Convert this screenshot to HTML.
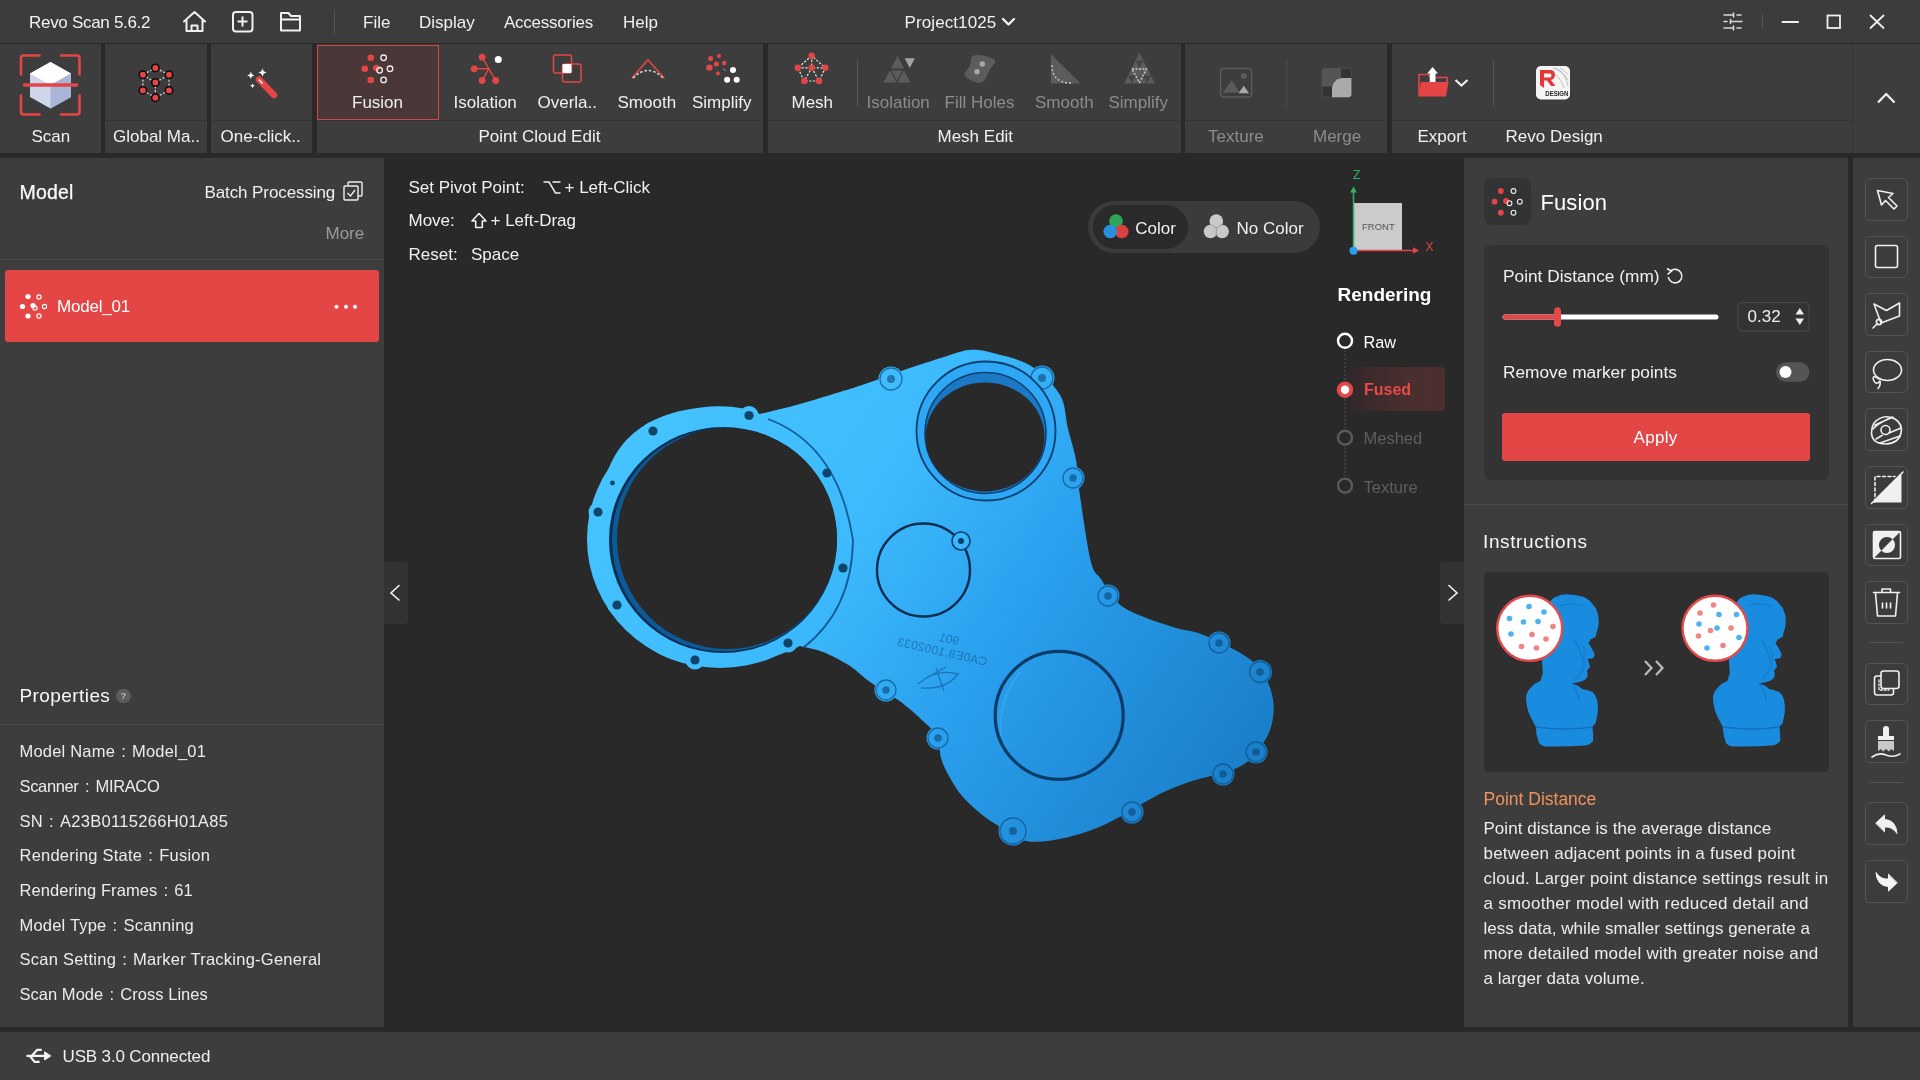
<!DOCTYPE html>
<html><head><meta charset="utf-8">
<style>
*{margin:0;padding:0;box-sizing:border-box}
html,body{width:1920px;height:1080px;overflow:hidden;background:#292929;font-family:"Liberation Sans",sans-serif;color:#f2f2f2}
.a{position:absolute}
.t{position:absolute;white-space:nowrap;line-height:1}
#title{left:0;top:0;width:1920px;height:43px;background:#3c3c3c}
.grp{position:absolute;top:44px;height:109px;background:#3d3d3d}
.hl{position:absolute;height:1px;background:#353535}
#vp{left:384px;top:158px;width:1080px;height:869px;background:#292929}
#lp{left:0;top:158px;width:384px;height:869px;background:#3d3d3d}
#rp{left:1464px;top:158px;width:384px;height:869px;background:#3d3d3d}
#tc{left:1853px;top:158px;width:67px;height:869px;background:#3d3d3d}
#sb{left:0;top:1032px;width:1920px;height:48px;background:#3d3d3d}
.l17{font-size:17px;color:#f0f0f0}
.dis{color:#8c8c8c}
.prop{font-size:16.5px;color:#ececec}
.tb{position:absolute;left:1865px;width:42.5px;height:42.5px;border:1.2px solid #545454;border-radius:5px;background:#3c3c3c}
svg{position:absolute;overflow:visible}
body{will-change:transform}
.c{display:inline-block;text-align:center}
</style></head><body>

<!-- TITLE BAR -->
<div id="title" class="a"></div>
<div class="t" style="left:29px;top:13.5px;font-size:17px;letter-spacing:-0.3px">Revo Scan 5.6.2</div>
<svg style="left:0;top:0" width="1920" height="44" fill="none" stroke="#f0f0f0" stroke-width="2" stroke-linejoin="round" stroke-linecap="round">
  <!-- home -->
  <path d="M184 21.5 L194.5 12 L205 21.5 M186.5 19.5 V31 H202.5 V19.5 M191.5 31 V25.5 H197.5 V31"/>
  <!-- plus box -->
  <rect x="233" y="12" width="19.5" height="19.5" rx="3"/>
  <path d="M242.5 17.3 V25.7 M238.3 21.5 H246.7"/>
  <!-- folder -->
  <path d="M281 30.5 V13 H288.5 L291 16 H300 V30.5 Z M281 19.5 H300"/>
  <!-- chevron -->
  <path d="M1003 19 L1008.5 24.5 L1014 19" stroke-width="2.4"/>
  <!-- sliders -->
  <path d="M1724 15 H1733 M1737 15 H1741 M1733.5 13 V17 M1724 21.5 H1727 M1731 21.5 H1742 M1730.5 19.5 V23.5 M1724 28 H1733 M1737 28 H1741 M1733.5 26 V30" stroke="#d8d8d8" stroke-width="1.6"/>
  <!-- min / max / close -->
  <path d="M1782.5 22 H1798" stroke-width="2"/>
  <rect x="1827.5" y="15.5" width="12.5" height="12.5" stroke-width="1.8" stroke-linejoin="miter"/>
  <path d="M1870.5 15.5 L1883.5 28 M1883.5 15.5 L1870.5 28" stroke-width="1.8"/>
  <path d="M334.5 10 V33 M1762.5 14.5 V28.5" stroke="#555" stroke-width="1"/>
</svg>
<div class="t l17" style="left:363px;top:13.5px">File</div>
<div class="t l17" style="left:419px;top:13.5px">Display</div>
<div class="t l17" style="left:504px;top:13.5px;letter-spacing:-0.25px">Accessories</div>
<div class="t l17" style="left:623px;top:13.5px">Help</div>
<div class="t l17" style="left:904.5px;top:13.5px;letter-spacing:0.1px">Project1025</div>

<!-- TOOLBAR GROUPS -->
<div class="grp" style="left:0;width:101px"></div>
<div class="grp" style="left:105px;width:102px"></div>
<div class="grp" style="left:211px;width:101px"></div>
<div class="grp" style="left:317px;width:446px"></div>
<div class="grp" style="left:768px;width:413px"></div>
<div class="grp" style="left:1185px;width:202px"></div>
<div class="grp" style="left:1392px;width:460px"></div>
<div class="grp" style="left:1853px;width:67px"></div>
<div class="hl" style="left:105px;top:120px;width:102px"></div>
<div class="hl" style="left:211px;top:120px;width:101px"></div>
<div class="hl" style="left:317px;top:120px;width:446px"></div>
<div class="hl" style="left:768px;top:120px;width:413px"></div>
<div class="hl" style="left:1185px;top:120px;width:202px"></div>
<div class="hl" style="left:1392px;top:120px;width:460px"></div>
<div class="a" style="left:317px;top:45px;width:122px;height:75px;background:#4a3838;border:1px solid #d94444"></div>
<!-- TOOLBAR ICONS -->
<svg style="left:0;top:0" width="1920" height="160">
  <!-- Scan -->
  <g fill="none" stroke="#e64545" stroke-width="2.6" stroke-linecap="round">
    <path d="M21 74.5 V58 Q21 55.5 23.5 55.5 H39.5 M61 55.5 H77 Q79.5 55.5 79.5 58 V74.5 M79.5 95.5 V112 Q79.5 114.5 77 114.5 H61 M39.5 114.5 H23.5 Q21 114.5 21 112 V95.5"/>
  </g>
  <path d="M50.5 62 L71 73.5 V97 L50.5 108.5 L30 97 V73.5 Z" fill="#cfd6ec"/>
  <path d="M50.5 62 L71 73.5 L50.5 85 L30 73.5 Z" fill="#ffffff"/>
  <path d="M50.5 85 L71 73.5 V97 L50.5 108.5 Z" fill="#a9b5d6"/>
  <path d="M24.5 85 H76.5" stroke="#e64545" stroke-width="3.6" stroke-linecap="round"/>
  <!-- Global Ma -->
  <g stroke="#ddd" stroke-width="1.2" stroke-dasharray="2.2 1.6" fill="none">
    <path d="M155.4 67.9 L142.9 74.75 V90.4 L155.4 97.7 L169 90.4 V74.75 Z M142.9 74.75 L155.4 82.5 L169 74.75 M155.4 82.5 V97.7"/>
  </g>
  <g fill="#e64545" stroke="#0a0a0a" stroke-width="1.5">
    <circle cx="155.4" cy="67.9" r="3.7"/><circle cx="142.9" cy="74.75" r="3.7"/><circle cx="169" cy="74.75" r="3.7"/>
    <circle cx="155.4" cy="82.5" r="3.7"/><circle cx="142.9" cy="90.4" r="3.7"/><circle cx="169" cy="90.4" r="3.7"/><circle cx="155.4" cy="97.7" r="3.7"/>
  </g>
  <!-- One-click -->
  <path d="M259 79.5 L274 95" stroke="#e64545" stroke-width="6.5" stroke-linecap="round"/>
  <path d="M259.3 80 L262.3 83.2" stroke="#fff" stroke-width="1.4" stroke-linecap="round"/>
  <g fill="#fff">
    <path d="M250.8 71.8 L251.9 74.3 L254.4 75.4 L251.9 76.5 L250.8 79 L249.7 76.5 L247.2 75.4 L249.7 74.3 Z"/>
    <path d="M262.5 68.5 L263.7 71.3 L266.5 72.5 L263.7 73.7 L262.5 76.5 L261.3 73.7 L258.5 72.5 L261.3 71.3 Z"/>
    <path d="M252.5 83.5 L253.3 85 L254.8 85.8 L253.3 86.6 L252.5 88.1 L251.7 86.6 L250.2 85.8 L251.7 85 Z"/>
  </g>
  <!-- Fusion -->
  <g fill="#e64545"><circle cx="370.8" cy="57.8" r="3.3"/><circle cx="364.8" cy="68.8" r="3.3"/><circle cx="376.3" cy="68" r="3.3"/><circle cx="370.8" cy="80" r="3.3"/></g>
  <g fill="none" stroke="#eee" stroke-width="1.3"><circle cx="383.6" cy="57.8" r="2.8"/><circle cx="379.6" cy="70.3" r="2.8"/><circle cx="390" cy="68.8" r="2.8"/><circle cx="383.6" cy="79.9" r="2.8"/></g>
  <!-- Isolation -->
  <path d="M482.1 57.2 L495.7 80.5 M488.75 68.8 L482.1 80.5 M474.2 68.8 H488.75" stroke="#e64545" stroke-width="1.4" fill="none"/>
  <g fill="#e64545"><circle cx="482.1" cy="57.2" r="3.4"/><circle cx="474.2" cy="68.8" r="3.4"/><circle cx="482.1" cy="80.5" r="3.4"/><circle cx="495.7" cy="80.5" r="3.4"/></g>
  <circle cx="498.3" cy="59.5" r="3.5" fill="#fff"/>
  <!-- Overlap -->
  <g fill="none" stroke="#e64545" stroke-width="1.5"><rect x="553.5" y="55" width="18" height="18" rx="2"/><rect x="562.5" y="64" width="18.5" height="18" rx="2"/></g>
  <rect x="562.5" y="64" width="9" height="9" fill="#fff" rx="1"/>
  <!-- Smooth -->
  <path d="M632 78.2 L647.9 59.7 L664.3 78.2" fill="none" stroke="#e64545" stroke-width="1.6"/>
  <path d="M633 78 Q648 63 663 78" fill="none" stroke="#ddd" stroke-width="1.5" stroke-dasharray="2.5 2"/>
  <!-- Simplify -->
  <g fill="#e64545"><circle cx="710.6" cy="58.4" r="2.5"/><circle cx="719" cy="56.1" r="2"/><circle cx="716.4" cy="64.1" r="2.5"/><circle cx="724.2" cy="63.1" r="2.3"/><circle cx="709.4" cy="67.6" r="3.2"/><circle cx="717.9" cy="73.5" r="2"/></g>
  <g fill="#fff"><circle cx="733" cy="70.1" r="3"/><circle cx="727.1" cy="79.8" r="3"/><circle cx="736.7" cy="79.8" r="3"/></g>
  <path d="M723 68.5 L726 71" stroke="#999" stroke-width="1"/>
  <!-- Mesh -->
  <g stroke="#e8e8e8" stroke-width="1.2" stroke-dasharray="2.2 1.6" fill="none">
    <path d="M811.7 55.8 L797.8 67.8 L804.25 81 H819.1 L825.3 67.8 Z M797.8 67.8 H825.3 M811.7 55.8 V67.8 L804.25 81 M811.7 67.8 L819.1 81"/>
  </g>
  <g fill="#e64545"><circle cx="811.7" cy="55.8" r="3.2"/><circle cx="797.8" cy="67.8" r="3.2"/><circle cx="811.7" cy="67.8" r="3.2"/><circle cx="825.3" cy="67.8" r="3.2"/><circle cx="804.25" cy="81" r="3.2"/><circle cx="819.1" cy="81" r="3.2"/></g>
  <path d="M857.5 59 V106" stroke="#555" stroke-width="1"/>
  <!-- Mesh Isolation -->
  <g fill="#5c5c5c">
    <path d="M897.6 55.8 L904.2 68.6 H891 Z"/>
    <path d="M890 70.5 L896.5 82.5 H883.5 Z"/>
    <path d="M904 70.5 L910.5 82.5 H897.5 Z"/>
    <path d="M891.5 70.5 H902.5 L897 80.5 Z"/>
  </g>
  <path d="M904.7 58.3 H914.8 L909.75 68 Z" fill="#a3a3a3"/>
  <!-- Fill Holes -->
  <path d="M973 56 Q979 53 991 58 Q997 60 995 63 Q989 69 987 76 Q985 83 978 83 Q970 81 965 76 Q963 74 967 70 Q971 66 971 60 Q971 57 973 56 Z" fill="#5c5c5c"/>
  <circle cx="982.3" cy="64" r="2.7" fill="#a8a8a8"/><circle cx="977" cy="71.8" r="2.7" fill="#a8a8a8"/>
  <!-- Mesh Smooth -->
  <path d="M1050.8 54.1 L1080.6 83.5 H1050.8 Z" fill="#5c5c5c"/>
  <path d="M1052 65 Q1052 83 1071 83" fill="none" stroke="#c8c8c8" stroke-width="1.4" stroke-dasharray="2 2"/>
  <!-- Mesh Simplify -->
  <path d="M1139.4 52.7 L1154.8 83.5 H1124.3 Z" fill="#5c5c5c"/>
  <g fill="#444"><path d="M1135.5 60.5 H1143.5 L1139.5 68 Z"/><path d="M1128 75.5 H1136 L1132 83 Z"/><path d="M1143 75.5 H1151 L1147 83 Z"/><path d="M1135.5 75.5 H1143.5 L1139.5 83 Z" fill="#555"/></g>
  <path d="M1132 69 H1146.5 L1139.4 82.5 Z" fill="none" stroke="#d0d0d0" stroke-width="1.3" stroke-dasharray="2 1.5"/>
  <!-- Texture -->
  <rect x="1220.6" y="68.4" width="31" height="28.5" rx="3" fill="none" stroke="#5a5a5a" stroke-width="1.5"/>
  <path d="M1222.5 92.8 L1231.7 80.3 L1240 92.8 Z" fill="#5a5a5a"/>
  <path d="M1238.5 93.3 L1243.75 85.7 L1249 93.3 Z" fill="#aaaaaa"/>
  <circle cx="1243.75" cy="76.1" r="3" fill="#5a5a5a"/>
  <path d="M1287 58 V106" stroke="#4f4f4f" stroke-width="1"/>
  <!-- Merge -->
  <rect x="1322" y="68.2" width="29.4" height="29" rx="3" fill="#333" stroke="#4a4a4a" stroke-width="1"/>
  <path d="M1322 86.5 V71 Q1322 68.2 1325 68.2 H1341 V78 Q1332 86.5 1332 86.5 Z" fill="#555"/>
  <path d="M1332 97.2 V87.5 Q1333 80 1341.5 78 H1351.4 V94.2 Q1351.4 97.2 1348.4 97.2 Z" fill="#aaa"/>
  <!-- Export -->
  <path d="M1419 95 V74.5 H1428 L1431 77.5 H1447 V82" fill="none" stroke="#e64545" stroke-width="1.6"/>
  <path d="M1421 82 H1448.5 L1446 96.6 H1418.5 Z" fill="#e64545"/>
  <path d="M1432.6 66.9 L1438 73.5 H1435.5 V82 H1429.7 V73.5 H1427.2 Z" fill="#fff"/>
  <path d="M1455.5 80 L1461.5 85.5 L1467.5 80" fill="none" stroke="#f0f0f0" stroke-width="2.2"/>
  <path d="M1493.5 60 V106" stroke="#555" stroke-width="1"/>
  <!-- Revo Design -->
  <rect x="1536" y="66" width="34" height="33.4" rx="5" fill="#f4f4f4"/>
  <path d="M1540 70 H1550 Q1555 70 1555 75 Q1555 79 1551 80 L1555.5 86 H1551 L1547 80.5 H1544 V88 L1540 85 Z M1544 73.5 V77.5 H1550 Q1551.5 77.5 1551.5 75.5 Q1551.5 73.5 1550 73.5 Z" fill="#e83535"/>
  <g stroke="#888" stroke-width="0.6" fill="none" opacity="0.8"><path d="M1553 68 Q1562 70 1568 80 M1556 68 Q1566 74 1568 86 M1560 68 L1568 74 M1552 72 Q1560 76 1564 88"/></g>
  <text x="1545.3" y="96" font-family="Liberation Sans" font-size="6.5" font-weight="bold" fill="#222" textLength="23" lengthAdjust="spacingAndGlyphs">DESIGN</text>
  <!-- collapse chevron -->
  <path d="M1878 102.5 L1886.2 94 L1894.5 102.5" fill="none" stroke="#f2f2f2" stroke-width="2.2"/>
  <path d="M1852.5 44 V153" stroke="#353535" stroke-width="1"/>
</svg>

<!-- TOOLBAR LABELS -->
<div class="t l17" style="left:31.5px;top:128px">Scan</div>
<div class="t l17" style="left:113px;top:128px">Global Ma..</div>
<div class="t l17" style="left:220.5px;top:128px">One-click..</div>
<div class="t l17" style="left:352px;top:94px">Fusion</div>
<div class="t l17" style="left:453.5px;top:94px">Isolation</div>
<div class="t l17" style="left:537.5px;top:94px">Overla..</div>
<div class="t l17" style="left:617.5px;top:94px">Smooth</div>
<div class="t l17" style="left:692px;top:94px">Simplify</div>
<div class="t l17" style="left:478.5px;top:128px">Point Cloud Edit</div>
<div class="t l17" style="left:791.5px;top:94px">Mesh</div>
<div class="t l17 dis" style="left:866.5px;top:94px">Isolation</div>
<div class="t l17 dis" style="left:944.5px;top:94px">Fill Holes</div>
<div class="t l17 dis" style="left:1035px;top:94px">Smooth</div>
<div class="t l17 dis" style="left:1108.5px;top:94px">Simplify</div>
<div class="t l17" style="left:937.5px;top:128px">Mesh Edit</div>
<div class="t l17 dis" style="left:1208px;top:128px">Texture</div>
<div class="t l17 dis" style="left:1313px;top:128px">Merge</div>
<div class="t l17" style="left:1417.5px;top:128px">Export</div>
<div class="t l17" style="left:1505.5px;top:128px">Revo Design</div>
<!-- PANELS -->
<div id="lp" class="a"></div>
<div id="vp" class="a"></div>
<div id="rp" class="a"></div>
<div id="tc" class="a"></div>
<div id="sb" class="a"></div>

<!-- LEFT PANEL -->
<div class="t" style="left:19.5px;top:183px;font-size:19.5px;letter-spacing:0.2px;color:#fafafa;-webkit-text-stroke:0.25px #fafafa">Model</div>
<div class="t l17" style="left:204.5px;top:183.5px;letter-spacing:-0.1px">Batch Processing</div>
<svg style="left:0;top:0" width="384" height="1080" fill="none">
  <path d="M348 185.5 V183 Q348 182 349 182 H361 Q362 182 362 183 V195 Q362 196 361 196 H358.5" stroke="#eee" stroke-width="1.4"/>
  <rect x="344" y="186" width="14" height="14" rx="1" stroke="#eee" stroke-width="1.4"/>
  <path d="M347.5 193 L350.5 196 L355 190" stroke="#eee" stroke-width="1.4"/>
</svg>
<div class="t l17" style="left:325.5px;top:224.7px;color:#9a9a9a">More</div>
<div class="a" style="left:0;top:259px;width:384px;height:1px;background:#4d4d4d"></div>
<div class="a" style="left:5px;top:270px;width:374px;height:72px;background:#e44646;border-radius:3px"></div>
<svg style="left:0;top:0" width="384" height="400">
  <g fill="#fff"><circle cx="28" cy="296.5" r="2.6"/><circle cx="22.5" cy="306.5" r="2.6"/><circle cx="33" cy="305.5" r="2.6"/><circle cx="28" cy="316" r="2.6"/></g>
  <g fill="none" stroke="#fff" stroke-width="1.1"><circle cx="39" cy="297" r="2.1"/><circle cx="35" cy="308" r="2.1"/><circle cx="44.5" cy="306.5" r="2.1"/><circle cx="39" cy="316" r="2.1"/></g>
  <g fill="#fff"><circle cx="336.5" cy="306.8" r="2"/><circle cx="346" cy="306.8" r="2"/><circle cx="355" cy="306.8" r="2"/></g>
</svg>
<div class="t l17" style="left:57px;top:297.6px;color:#fff;letter-spacing:-0.2px">Model_01</div>

<div class="t" style="left:19.5px;top:686px;font-size:19px;color:#f8f8f8;letter-spacing:0.42px">Properties</div>
<div class="a" style="left:116.3px;top:688.8px;width:14.5px;height:14.5px;border-radius:50%;background:#5d5d5d;color:#bbb;font-size:9px;line-height:14.5px;text-align:center;font-weight:bold">?</div>
<div class="a" style="left:0;top:723.5px;width:384px;height:1px;background:#4d4d4d"></div>
<div class="t prop" style="left:19.5px;top:743.2px;letter-spacing:0.2px">Model Name<span class="c" style="width:17px">:</span>Model_01</div>
<div class="t prop" style="left:19.5px;top:777.9px;letter-spacing:-0.35px">Scanner<span class="c" style="width:17px">:</span>MIRACO</div>
<div class="t prop" style="left:19.5px;top:812.6px;letter-spacing:0.3px">SN<span class="c" style="width:17px">:</span>A23B0115266H01A85</div>
<div class="t prop" style="left:19.5px;top:847.3px;letter-spacing:0.23px">Rendering State<span class="c" style="width:17px">:</span>Fusion</div>
<div class="t prop" style="left:19.5px;top:882px;letter-spacing:0.07px">Rendering Frames<span class="c" style="width:17px">:</span>61</div>
<div class="t prop" style="left:19.5px;top:916.7px;letter-spacing:0.2px">Model Type<span class="c" style="width:17px">:</span>Scanning</div>
<div class="t prop" style="left:19.5px;top:951.4px;letter-spacing:0.25px">Scan Setting<span class="c" style="width:17px">:</span>Marker Tracking-General</div>
<div class="t prop" style="left:19.5px;top:986px;letter-spacing:0.035px">Scan Mode<span class="c" style="width:17px">:</span>Cross Lines</div>

<!-- STATUS BAR -->
<svg style="left:0;top:0" width="300" height="1080" fill="none" stroke="#f4f4f4" stroke-width="2.3" stroke-linejoin="round">
  <path d="M26.5 1055.9 H46"/>
  <path d="M41.7 1049.8 H37.2 L31.7 1055.9 M39.6 1061.9 H34.6 L29.8 1055.9"/>
  <path d="M44.6 1051.8 L50.8 1055.9 L44.6 1060 Z" fill="#f4f4f4" stroke-width="1"/>
</svg>
<div class="t l17" style="left:62.5px;top:1047.5px;letter-spacing:-0.15px">USB 3.0 Connected</div>

<!-- VIEWPORT OVERLAY TEXT -->
<div class="t l17" style="left:408.5px;top:178.6px">Set Pivot Point:</div>
<svg style="left:0;top:0" width="600" height="220" fill="none" stroke="#f0f0f0" stroke-width="1.5"><path d="M543.5 182 H549 L555.5 193 H560.5 M552.5 182 H560.5"/></svg>
<div class="t l17" style="left:564.5px;top:178.6px">+ Left-Click</div>
<div class="t l17" style="left:408.5px;top:212.4px">Move:</div>
<svg style="left:470px;top:212px" width="18" height="18" fill="none" stroke="#f0f0f0" stroke-width="1.6" stroke-linejoin="round"><path d="M9 1.5 L16 9 H12.3 V15.5 H5.7 V9 H2 Z"/></svg>
<div class="t l17" style="left:490.5px;top:212.4px">+ Left-Drag</div>
<div class="t l17" style="left:408.5px;top:246.3px">Reset:</div>
<div class="t l17" style="left:471px;top:246.3px">Space</div>

<!-- collapse buttons -->
<div class="a" style="left:384px;top:562px;width:24px;height:62px;background:#333;border-radius:0 3px 3px 0"></div>
<div class="a" style="left:1440px;top:562px;width:24px;height:62px;background:#333;border-radius:3px 0 0 3px"></div>
<svg style="left:0;top:0" width="1920" height="1080" fill="none" stroke="#f4f4f4" stroke-width="1.6" stroke-linecap="round">
  <path d="M399 585.5 L391 593 L399 600"/>
  <path d="M1449 585.5 L1457 593 L1449 600"/>
</svg>
<!-- COLOR PILL -->
<div class="a" style="left:1087.5px;top:200.5px;width:232px;height:52px;border-radius:26px;background:#3b3b3b"></div>
<div class="a" style="left:1092.5px;top:205px;width:95px;height:43.5px;border-radius:22px;background:#2a2a2a"></div>
<svg style="left:0;top:0" width="1920" height="300">
  <circle cx="1116" cy="221" r="6.8" fill="#2fa55a"/>
  <circle cx="1121.8" cy="231.5" r="6.8" fill="#d94040"/>
  <circle cx="1110.2" cy="231.5" r="6.8" fill="#2b8fe0"/>
  <circle cx="1216.3" cy="221" r="6.8" fill="#c8c8c8"/>
  <circle cx="1222.1" cy="231.5" r="6.8" fill="#c8c8c8"/>
  <circle cx="1210.5" cy="231.5" r="6.8" fill="#c8c8c8"/>
  <path d="M1216.3 228 V235 M1216.3 228 L1210.5 224.5 M1216.3 228 L1222.1 224.5" stroke="#9a9a9a" stroke-width="1"/>
</svg>
<div class="t l17" style="left:1135.3px;top:219.5px">Color</div>
<div class="t l17" style="left:1236.5px;top:219.5px">No Color</div>

<!-- AXIS WIDGET -->
<div class="a" style="left:1353.5px;top:203px;width:48px;height:47.5px;background:#cbcbcb"></div>
<div class="t" style="left:1362px;top:222px;font-size:9.5px;color:#555">FRONT</div>
<svg style="left:0;top:0" width="1920" height="300">
  <path d="M1353.5 251 V191" stroke="#2fb36a" stroke-width="1.5"/>
  <path d="M1350.2 192.5 L1353.5 186.5 L1356.8 192.5 Z" fill="#2fb36a"/>
  <path d="M1353.5 250.5 H1414" stroke="#e04848" stroke-width="1.5"/>
  <path d="M1413 247.2 L1419 250.5 L1413 253.8 Z" fill="#e04848"/>
  <circle cx="1353.5" cy="250.8" r="4" fill="#2aa0f0"/>
  <text x="1353" y="179" font-family="Liberation Sans" font-size="12" fill="#2fb36a">Z</text>
  <text x="1425.5" y="250.5" font-family="Liberation Sans" font-size="12" fill="#e04848">X</text>
</svg>

<!-- RENDERING -->
<div class="t" style="left:1337.5px;top:284.8px;font-size:19px;font-weight:bold;color:#fff">Rendering</div>
<div class="a" style="left:1351px;top:367px;width:94px;height:44px;border-radius:0 4px 4px 0;background:linear-gradient(90deg,#33282a 0%,#4a2f2f 60%,#4d2e2e 100%)"></div>
<svg style="left:0;top:0" width="1920" height="520">
  <path d="M1345 350 V381 M1345 399 V428 M1345 447 V476" stroke="#555" stroke-width="1" stroke-dasharray="2 2"/>
  <circle cx="1345" cy="340.8" r="7" fill="none" stroke="#fff" stroke-width="2.4"/>
  <circle cx="1345" cy="389.7" r="8.2" fill="#e24848"/>
  <circle cx="1345" cy="389.7" r="4.2" fill="#fff"/>
  <circle cx="1345" cy="437.7" r="7" fill="none" stroke="#5a5a5a" stroke-width="2.4"/>
  <circle cx="1345" cy="485.6" r="7" fill="none" stroke="#5a5a5a" stroke-width="2.4"/>
</svg>
<div class="t" style="left:1363.5px;top:333.6px;font-size:16.3px;color:#fff">Raw</div>
<div class="t" style="left:1364px;top:381.5px;font-size:16px;font-weight:bold;color:#e84a4a">Fused</div>
<div class="t" style="left:1363.5px;top:430.4px;font-size:16.5px;color:#5e5e5e">Meshed</div>
<div class="t" style="left:1363.5px;top:478.5px;font-size:16.5px;color:#5e5e5e">Texture</div>
<!-- 3D OBJECT -->
<svg style="left:0;top:0" width="1920" height="1080">
  <defs>
    <linearGradient id="bg1" gradientUnits="userSpaceOnUse" x1="640" y1="400" x2="1230" y2="800">
      <stop offset="0" stop-color="#45c4ff"/>
      <stop offset="0.35" stop-color="#3dbafd"/>
      <stop offset="0.6" stop-color="#2aa0ee"/>
      <stop offset="1" stop-color="#1a7ec9"/>
    </linearGradient>
  </defs>
  <g fill="url(#bg1)">
    <path d="M600 520 Q600 430 680 411 Q730 400 760 414 C766.7 412.3 786.7 407.7 800.0 404.0 C813.3 400.3 829.2 395.3 840.0 392.0 C850.8 388.7 854.3 387.7 865.0 384.0 C875.7 380.3 890.8 374.5 904.0 370.0 C917.2 365.5 933.2 360.3 944.0 357.0 C954.8 353.7 960.8 350.7 969.0 350.0 C977.2 349.3 982.7 350.3 993.0 353.0 C1003.3 355.7 1019.8 359.0 1031.0 366.0 C1042.2 373.0 1053.8 384.5 1060.0 395.0 C1066.2 405.5 1065.3 418.2 1068.0 429.0 C1070.7 439.8 1074.0 448.8 1076.0 460.0 C1078.0 471.2 1077.5 479.0 1080.0 496.0 C1082.5 513.0 1087.5 548.2 1091.0 562.0 C1094.5 575.8 1097.0 572.7 1101.0 579.0 C1105.0 585.3 1109.5 594.3 1115.0 600.0 C1120.5 605.7 1123.8 608.3 1134.0 613.0 C1144.2 617.7 1164.8 624.5 1176.0 628.0 C1187.2 631.5 1190.0 629.7 1201.0 634.0 C1212.0 638.3 1231.8 647.7 1242.0 654.0 C1252.2 660.3 1256.8 664.5 1262.0 672.0 C1267.2 679.5 1271.5 689.8 1273.0 699.0 C1274.5 708.2 1273.5 718.5 1271.0 727.0 C1268.5 735.5 1263.7 743.2 1258.0 750.0 C1252.3 756.8 1248.5 762.7 1237.0 768.0 C1225.5 773.3 1202.5 777.3 1189.0 782.0 C1175.5 786.7 1169.8 789.0 1156.0 796.0 C1142.2 803.0 1121.3 817.0 1106.0 824.0 C1090.7 831.0 1077.3 835.2 1064.0 838.0 C1050.7 840.8 1037.2 843.2 1026.0 841.0 C1014.8 838.8 1004.7 829.7 997.0 825.0 C989.3 820.3 985.8 817.8 980.0 813.0 C974.2 808.2 967.2 802.2 962.0 796.0 C956.8 789.8 952.5 782.3 949.0 776.0 C945.5 769.7 942.8 764.5 941.0 758.0 C939.2 751.5 940.8 743.0 938.0 737.0 C935.2 731.0 930.2 727.8 924.0 722.0 C917.8 716.2 910.0 708.7 901.0 702.0 C892.0 695.3 878.5 688.0 870.0 682.0 C861.5 676.0 857.8 671.0 850.0 666.0 C842.2 661.0 831.3 655.3 823.0 652.0 C814.7 648.7 803.8 647.0 800.0 646.0 Q740 675 680 662 Q600 640 600 520 Z"/>
    <ellipse cx="720" cy="539" rx="133" ry="129"/>
    <circle cx="653" cy="431" r="9.5"/><circle cx="749" cy="415.5" r="9.5"/><circle cx="827" cy="473" r="9.5"/><circle cx="843" cy="568" r="9.5"/>
    <circle cx="788" cy="643" r="9.5"/><circle cx="695" cy="660" r="9.5"/><circle cx="617" cy="605" r="9.5"/><circle cx="598" cy="512" r="9.5"/>
    <circle cx="891" cy="379" r="12.5"/><circle cx="1042" cy="378" r="12.5"/><circle cx="1073" cy="478" r="11.5"/>
    <circle cx="1108" cy="596" r="11.5"/><circle cx="1219" cy="643" r="11.5"/><circle cx="1260" cy="672" r="12"/>
    <circle cx="1256" cy="752" r="11.5"/><circle cx="1223" cy="774" r="11.5"/><circle cx="1132" cy="812" r="11.5"/><circle cx="1013" cy="831" r="14.5"/>
    <circle cx="938" cy="738" r="11.5"/><circle cx="886" cy="690" r="11.5"/>
  </g>
  <g fill="none" stroke="#0d4f85" stroke-width="1.3" opacity="0.7">
    <circle cx="891" cy="379" r="11"/><circle cx="1042" cy="378" r="11"/><circle cx="1073" cy="478" r="10"/>
    <circle cx="1108" cy="596" r="10"/><circle cx="1219" cy="643" r="10"/><circle cx="1260" cy="672" r="10.5"/>
    <circle cx="1256" cy="752" r="10"/><circle cx="1223" cy="774" r="10"/><circle cx="1132" cy="812" r="10"/><circle cx="1013" cy="831" r="13"/>
    <circle cx="938" cy="738" r="10"/><circle cx="886" cy="690" r="10"/><circle cx="961" cy="541" r="8"/>
  </g>
  <g fill="#0b3f6e" opacity="0.55">
        <circle cx="891" cy="379" r="4"/><circle cx="1042" cy="378" r="4"/><circle cx="1073" cy="478" r="3.8"/><circle cx="961" cy="541" r="3"/>
    <circle cx="1108" cy="596" r="3.8"/><circle cx="1219" cy="643" r="3.8"/><circle cx="1260" cy="672" r="3.8"/><circle cx="1256" cy="752" r="3.8"/>
    <circle cx="1223" cy="774" r="3.8"/><circle cx="1132" cy="812" r="3.8"/><circle cx="1013" cy="831" r="4"/><circle cx="938" cy="738" r="3.8"/><circle cx="886" cy="690" r="3.8"/>
  </g>
  <g fill="#08304f" opacity="0.85">
    <circle cx="653" cy="431" r="4.6"/><circle cx="749" cy="415.5" r="4.6"/><circle cx="827" cy="473" r="4.6"/><circle cx="843" cy="568" r="4.6"/>
    <circle cx="788" cy="643" r="4.6"/><circle cx="695" cy="660" r="4.6"/><circle cx="617" cy="605" r="4.6"/><circle cx="598" cy="512" r="4.6"/><circle cx="612.5" cy="483" r="2.4"/>
  </g>
  <!-- ring outer edge line -->
  <path d="M768 419 Q838 445 853 540 Q852 610 803 648" fill="none" stroke="#0c4a80" stroke-width="1.8" opacity="0.85"/>
  <!-- big ring hole -->
  <ellipse cx="723" cy="540" rx="114" ry="113" fill="#0a2f52"/>
  <ellipse cx="724" cy="540" rx="112" ry="111.5" fill="#0d5a98"/>
  <ellipse cx="727" cy="538.5" rx="110" ry="110.5" fill="#292929"/>
  <!-- upper hole -->
  <circle cx="986" cy="431" r="69.5" fill="#2ea8f5" stroke="#0b3f6e" stroke-width="1.8"/>
  <circle cx="985.5" cy="433" r="60.5" fill="#1a78c4" stroke="#0b3f6e" stroke-width="1.5"/>
  <ellipse cx="985" cy="437" rx="59.5" ry="54.5" fill="#292929"/>
  <!-- small recess -->
  <circle cx="923.5" cy="570" r="46.5" fill="none" stroke="#082c4e" stroke-width="2.4"/>
  <circle cx="961" cy="541" r="9" fill="#3ab6fc" stroke="#0b3f6e" stroke-width="1.6"/>
  <circle cx="961" cy="541" r="3" fill="#0b3f6e"/>
  <!-- big recess -->
  <circle cx="1059.2" cy="715.4" r="64" fill="none" stroke="#0a3a66" stroke-width="3.2"/>
  <path d="M1001 735 Q998 700 1020 672" fill="none" stroke="#4cbcff" stroke-width="2" opacity="0.35"/>
  <!-- engraved text -->
  <g transform="translate(986 666) rotate(13) scale(-1 1)" opacity="0.55">
    <text x="0" y="0" font-family="Liberation Sans" font-size="12" fill="#0d4f8a" letter-spacing="0.3">CA0E8.1002033</text>
    <text x="32" y="-14" font-family="Liberation Sans" font-size="12" fill="#0d4f8a">901</text>
  </g>
  <path d="M918 684 Q936 668 958 674 Q946 690 921 688 M936 668 L944 691 M927 678 L946 667" fill="none" stroke="#0d4f8a" stroke-width="1.3" opacity="0.55"/>
</svg>

<!-- RIGHT PANEL -->
<div class="a" style="left:1483.5px;top:177.5px;width:47.5px;height:47.5px;border-radius:8px;background:#333"></div>
<svg style="left:0;top:0" width="1920" height="300">
  <g fill="#e64545"><circle cx="1500.8" cy="191" r="2.9"/><circle cx="1494.6" cy="201.7" r="2.9"/><circle cx="1506" cy="201" r="2.9"/><circle cx="1500.8" cy="212.7" r="2.9"/></g>
  <g fill="none" stroke="#eee" stroke-width="1.1"><circle cx="1513.5" cy="191" r="2.4"/><circle cx="1509.5" cy="203.2" r="2.4"/><circle cx="1519.8" cy="201.7" r="2.4"/><circle cx="1513.5" cy="212.7" r="2.4"/></g>
</svg>
<div class="t" style="left:1540.5px;top:192px;font-size:22px;color:#fff;letter-spacing:0.1px">Fusion</div>
<div class="a" style="left:1483.5px;top:245px;width:345px;height:235px;border-radius:6px;background:#333"></div>
<div class="t" style="left:1503px;top:267.5px;font-size:17.3px;color:#f2f2f2">Point Distance (mm)</div>
<svg style="left:0;top:0" width="1920" height="500" fill="none">
  <path d="M1670.5 271 A6.8 6.8 0 1 1 1668.3 277" stroke="#eee" stroke-width="1.6"/>
  <path d="M1667 268.5 L1671.5 271.2 L1667.5 274.5" stroke="#eee" stroke-width="1.6"/>
  <rect x="1502.5" y="314.5" width="216" height="5" rx="2.5" fill="#fff"/>
  <rect x="1502.5" y="314.5" width="54" height="5" rx="2.5" fill="#e24848"/>
  <rect x="1554" y="307.2" width="7" height="19.5" rx="3.5" fill="#e24848"/>
  <rect x="1738" y="302.5" width="71" height="28.5" rx="4" fill="#333" stroke="#4a4a4a" stroke-width="1"/>
  <path d="M1795.5 314.5 L1799.8 308 L1804 314.5 Z M1795.5 318.5 L1799.8 325 L1804 318.5 Z" fill="#eee"/>
  <rect x="1776" y="362.3" width="33.5" height="19.5" rx="9.75" fill="#555"/>
  <circle cx="1785.5" cy="372" r="6" fill="#fff"/>
</svg>
<div class="t l17" style="left:1747.5px;top:308.4px">0.32</div>
<div class="t" style="left:1503px;top:363.7px;font-size:17.3px;color:#f2f2f2">Remove marker points</div>
<div class="a" style="left:1502px;top:413px;width:307.5px;height:47.5px;border-radius:3px;background:#e44646"></div>
<div class="t l17" style="left:1633.5px;top:429px;color:#fff;letter-spacing:0.3px">Apply</div>
<div class="a" style="left:1464px;top:504px;width:384px;height:1px;background:#4b4b4b"></div>
<div class="t" style="left:1483px;top:532.2px;font-size:19px;color:#f6f6f6;letter-spacing:0.62px">Instructions</div>
<div class="a" style="left:1483.5px;top:571.5px;width:345px;height:200px;border-radius:5px;background:#2f2f2f"></div>
<!-- INSTRUCTION IMAGE -->
<svg style="left:0;top:0" width="1920" height="1080">
  <defs>
    <g id="bust">
      <path d="M1549.8 602.3 Q1552 598 1556.1 596.8 Q1562 594 1568.7 594.4 Q1576 594.5 1582.9 596.8 Q1589 599 1592.4 603.9 Q1596 607 1597.1 611.8 Q1599 616 1598.7 621.2 Q1599 626 1597.1 630.7 L1595.5 637 L1590.8 639.3 L1588.4 643.3 Q1592 648 1594.7 654.3 L1593.1 658.2 L1587.6 659 Q1589 662 1590 666.9 L1586.9 670.8 Q1588 673 1587.6 676.3 Q1586 680 1582.9 681.1 Q1577 683 1571.9 683.4 L1578.2 685.8 L1582.1 688.9 Q1588 690 1592.4 692.1 Q1596 695 1597.1 700 Q1598 705 1597.9 711 Q1597 718 1595.5 723.6 L1592.4 726.7 Q1593.5 734 1593.1 740.9 Q1590 745 1584.5 745.6 Q1565 747 1545.1 746.4 Q1540 745 1538.8 742.5 Q1536 735 1535.7 726.7 L1532.5 720.4 Q1528 713 1527 706.3 Q1525.5 700 1526.2 695.2 Q1528 690 1530.9 687.4 Q1535 683 1540.4 681.1 L1542.8 673.2 L1542 660.6 L1543.5 632.2 L1546.7 613.3 Z" fill="#1a8ce0"/>
      <path d="M1536 727 Q1565 731 1592.5 727" fill="none" stroke="#1270bd" stroke-width="1.3"/>
      <path d="M1572 683.4 Q1578 692 1580 702 M1575 640 Q1580 650 1584 662 M1560 606 Q1570 602 1585 606" fill="none" stroke="#1474c0" stroke-width="1.1" opacity="0.8"/>
      <path d="M1583 646 Q1586 655 1584 666 Q1580 676 1574 680" fill="none" stroke="#1677c6" stroke-width="3" opacity="0.5"/>
    </g>
  </defs>
  <use href="#bust"/>
  <use href="#bust" transform="translate(187 0)"/>
  <g>
    <circle cx="1529.7" cy="628.3" r="32.5" fill="#fff" stroke="#e44a4a" stroke-width="2.4"/>
    <g fill="#4db3ec"><circle cx="1529" cy="606.5" r="2.8"/><circle cx="1544" cy="612" r="2.8"/><circle cx="1509.5" cy="618.5" r="2.8"/><circle cx="1523.5" cy="622" r="2.8"/><circle cx="1538" cy="621.5" r="2.8"/><circle cx="1511" cy="634" r="2.8"/></g>
    <g fill="#f08585"><circle cx="1553" cy="626.5" r="2.8"/><circle cx="1532" cy="634.5" r="2.8"/><circle cx="1546" cy="639" r="2.8"/><circle cx="1521.5" cy="646.5" r="2.8"/><circle cx="1536.5" cy="648" r="2.8"/></g>
  </g>
  <g>
    <circle cx="1715" cy="628.3" r="32.5" fill="#fff" stroke="#e44a4a" stroke-width="2.4"/>
    <g fill="#f08585"><circle cx="1713.5" cy="605" r="2.8"/><circle cx="1700" cy="613" r="2.8"/><circle cx="1731" cy="628" r="2.8"/><circle cx="1710.5" cy="630.5" r="2.8"/><circle cx="1698.5" cy="636" r="2.8"/><circle cx="1723" cy="645.5" r="2.8"/></g>
    <g fill="#4db3ec"><circle cx="1719" cy="614.5" r="2.8"/><circle cx="1736.5" cy="614.5" r="2.8"/><circle cx="1699" cy="624" r="2.8"/><circle cx="1717" cy="628" r="2.8"/><circle cx="1739" cy="637.5" r="2.8"/><circle cx="1707" cy="648" r="2.8"/></g>
  </g>
  <path d="M1645 661 L1651.5 668 L1645 675 M1656 661 L1662.5 668 L1656 675" fill="none" stroke="#bdbdbd" stroke-width="2.2"/>
</svg>

<div class="t" style="left:1483.5px;top:790.9px;font-size:17.5px;color:#f0925a">Point Distance</div>
<div class="t" style="left:1483.5px;top:815.7px;font-size:17px;line-height:25px;color:#ececec;letter-spacing:0.036px">Point distance is the average distance</div>
<div class="t" style="left:1483.5px;top:840.7px;font-size:17px;line-height:25px;color:#ececec;letter-spacing:0.215px">between adjacent points in a fused point</div>
<div class="t" style="left:1483.5px;top:865.7px;font-size:17px;line-height:25px;color:#ececec;letter-spacing:0.18px">cloud. Larger point distance settings result in</div>
<div class="t" style="left:1483.5px;top:890.7px;font-size:17px;line-height:25px;color:#ececec;letter-spacing:0.24px">a smoother model with reduced detail and</div>
<div class="t" style="left:1483.5px;top:915.7px;font-size:17px;line-height:25px;color:#ececec;letter-spacing:0.03px">less data, while smaller settings generate a</div>
<div class="t" style="left:1483.5px;top:940.7px;font-size:17px;line-height:25px;color:#ececec;letter-spacing:0.21px">more detailed model with greater noise and</div>
<div class="t" style="left:1483.5px;top:965.7px;font-size:17px;line-height:25px;color:#ececec;letter-spacing:0.07px">a larger data volume.</div>

<!-- TOOL COLUMN -->
<div class="tb" style="top:178px"></div>
<div class="tb" style="top:235.5px"></div>
<div class="tb" style="top:293px"></div>
<div class="tb" style="top:350.5px"></div>
<div class="tb" style="top:408px"></div>
<div class="tb" style="top:466px"></div>
<div class="tb" style="top:523.5px"></div>
<div class="tb" style="top:581px"></div>
<div class="a" style="left:1869px;top:642px;width:34px;height:1px;background:#555"></div>
<div class="tb" style="top:662.5px"></div>
<div class="tb" style="top:720px"></div>
<div class="a" style="left:1869px;top:782px;width:34px;height:1px;background:#555"></div>
<div class="tb" style="top:802px"></div>
<div class="tb" style="top:860px"></div>
<svg style="left:0;top:0" width="1920" height="1080" fill="none" stroke="#f0f0f0" stroke-width="1.6" stroke-linejoin="round" stroke-linecap="round">
  <!-- cursor -->
  <path d="M1877.5 190.5 L1893 193.5 L1888.5 197.5 L1897 206 L1894 209 L1885.5 200.5 L1881.5 205 Z"/>
  <!-- square -->
  <rect x="1875.5" y="245.5" width="22" height="22" rx="2"/>
  <!-- polygon lasso -->
  <path d="M1874 304 L1886.5 310.5 L1899.5 303 V316 L1881 323 Z"/>
  <circle cx="1879" cy="322" r="2.6"/>
  <path d="M1876.5 324.5 L1873 328"/>
  <!-- lasso -->
  <ellipse cx="1887.5" cy="370" rx="14" ry="10.5"/>
  <path d="M1879 379 Q1872 374 1873.5 380 Q1876 386 1880 381 Q1881 385 1878 388.5"/>
  <!-- donut -->
  <path d="M1874 423 Q1883 413 1895 419 Q1903 424 1901 433 Q1899 443 1886 444 Q1872 444 1871.5 433 Q1871.5 427 1874 423 Z"/>
  <circle cx="1885.5" cy="430" r="4.5"/>
  <path d="M1873 429 Q1877 424 1888 419 M1876 439 L1882 435.5 M1889 433 L1901 428 M1880 443 L1900 436 M1875 425 L1893 417"/>
  <!-- dashed corner + triangle -->
  <path d="M1875 502 V476.5 H1895" stroke-dasharray="3 2.5"/>
  <path d="M1901.5 473 V502.5 H1872 Z" fill="#f0f0f0" stroke="none"/>
  <path d="M1903 472 L1871.5 503.5" stroke-width="1.5"/>
  <!-- square with circle -->
  <rect x="1873.5" y="531.5" width="27" height="27" rx="1.5"/>
  <path d="M1873.5 531.5 H1900.5 L1873.5 558.5 Z" fill="#f0f0f0" stroke="none"/>
  <path d="M1881.3 550.7 A8 8 0 0 1 1892.7 539.3 Z" fill="#3b3b3b" stroke="none"/>
  <path d="M1892.7 539.3 A8 8 0 0 1 1881.3 550.7 Z" fill="#f0f0f0" stroke="none"/>
  <!-- trash -->
  <path d="M1873.5 592.5 H1899.5 M1882 592 V589 H1890.5 V592 M1875.5 593 L1877.5 616 H1895.5 L1897.5 593 M1882.5 603 V608 M1886.5 603 V608 M1890.5 603 V608"/>
  <!-- copy -->
  <rect x="1881" y="671" width="18" height="17.5" rx="2.5"/>
  <path d="M1881 676 H1877 Q1874.5 676 1874.5 678.5 V692.5 Q1874.5 695 1877 695 H1891 Q1893.5 695 1893.5 692.5 V688.5"/>
  <path d="M1879 680 V690 H1889" stroke-dasharray="2 1.8" stroke-width="1.3"/>
  <!-- brush -->
  <path d="M1886 726 Q1889 726 1889 729 V736 H1883 V729 Q1883 726 1886 726 Z" fill="#f0f0f0" stroke="none"/>
  <rect x="1878" y="736" width="16" height="4" fill="#f0f0f0" stroke="none"/>
  <path d="M1878 741 H1894 V751 L1891 749 L1889 751.5 L1886 749 L1883 751.5 L1881 749 L1878 751 Z" fill="#c8c8c8" stroke="none"/>
  <path d="M1872 757 Q1879 752 1886 755 Q1893 758 1900 754"/>
  <!-- undo -->
  <path d="M1876 823 L1884.5 815 V819.5 Q1896 820 1897 833.5 Q1892 826 1884.5 827 V831.5 Z" fill="#f0f0f0" stroke="#f0f0f0" stroke-width="1"/>
  <!-- redo -->
  <path transform="translate(0 57) rotate(180 1886.5 824.5)" d="M1876 823 L1884.5 815 V819.5 Q1896 820 1897 833.5 Q1892 826 1884.5 827 V831.5 Z" fill="#f4f4f4" stroke="#f4f4f4" stroke-width="1"/>
</svg>
</body></html>
